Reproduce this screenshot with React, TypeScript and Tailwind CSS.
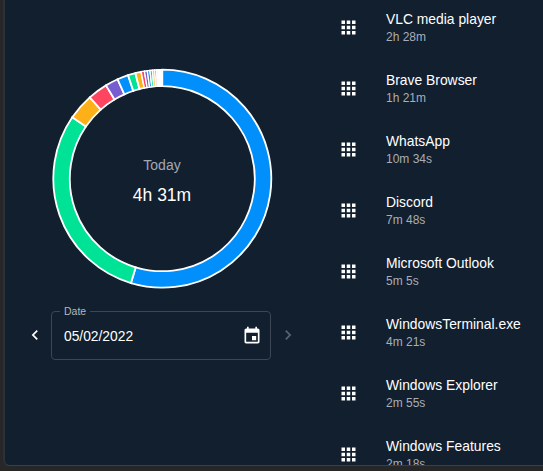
const apps = [
  { name: 'VLC media player', time: '2h 28m' },
  { name: 'Brave Browser', time: '1h 21m' },
  { name: 'WhatsApp', time: '10m 34s' },
  { name: 'Discord', time: '7m 48s' },
  { name: 'Microsoft Outlook', time: '5m 5s' },
  { name: 'WindowsTerminal.exe', time: '4m 21s' },
  { name: 'Windows Explorer', time: '2m 55s' },
  { name: 'Windows Features', time: '2m 18s' },
];

const palette = ['#008ffb', '#00e396', '#feb019', '#ff4560', '#775dd0'];
const sweeps = [
  196.7, 107.6, 14, 10.6, 6.9, 5.9, 4, 3.1, 1.75, 1.55, 1.4, 1.3, 1.2, 1, 0.8,
  0.6, 0.5, 0.4, 0.3, 0.2, 0.2,
];

function point(radius: number, angle: number) {
  const a = (angle * Math.PI) / 180;
  return `${110.3 + radius * Math.sin(a)} ${109.7 - radius * Math.cos(a)}`;
}

function Donut() {
  let start = 0;
  return (
    <svg className="h-[220px] w-[220px] overflow-visible" viewBox="0 0 220 220">
      {sweeps.map((sweep, i) => {
        const from = start;
        const to = Math.min(from + sweep, 360);
        start = to;
        const large = sweep > 180 ? 1 : 0;
        return (
          <path
            key={i}
            d={`M${point(109, from)}A109 109 0 ${large} 1 ${point(109, to)}L${point(92.5, to)}A92.5 92.5 0 ${large} 0 ${point(92.5, from)}Z`}
            fill={palette[i % 5]}
            stroke="#fff"
            strokeWidth={sweep < 2 ? 1.4 : 1.8}
          />
        );
      })}
    </svg>
  );
}

function Icon({ d, className }: { d: string; className: string }) {
  return (
    <svg viewBox="0 0 24 24" fill="currentColor" className={className}>
      <path d={d} />
    </svg>
  );
}

export default function App() {
  return (
    <div className="h-[471px] w-[543px] overflow-hidden bg-[#272727] pb-[5px] pl-[3px] font-['Liberation_Sans',Arial,sans-serif] text-white">
      <div className="flex h-[466px] overflow-hidden rounded-bl-[6px] border-b border-l-2 border-b-[#3a3f49] border-l-[#2b303d] bg-[#121f2f]">
        <main className="w-[321px] shrink-0 pt-[69px]">
          <div className="ml-[47px] grid h-[220px] w-[220px] place-items-center">
            <div className="col-start-1 row-start-1">
              <Donut />
            </div>
            <div className="col-start-1 row-start-1 pt-[4px] text-center">
              <div className="text-[14px] leading-[18px] text-[#a3a8b1]">Today</div>
              <div className="mt-[10px] text-[17.5px] leading-[22px]">4h 31m</div>
            </div>
          </div>
          <div className="ml-[20px] mt-[15px] flex items-center">
            <Icon className="mt-[6px] h-[20px] w-[20px]" d="M15.41 7.41 14 6l-6 6 6 6 1.41-1.41L10.83 12z" />
            <fieldset className="ml-[6px] flex h-[56px] w-[220px] rounded-[4px] border border-[#3c4654] pl-[12px] pr-[8px]">
              <legend className="-ml-[4px] px-[4px] text-[10.5px] leading-[14px] text-[#b3b7be]">Date</legend>
              <div className="flex h-[36px] w-full items-center justify-between">
                <span className="pt-[2px] text-[13.8px]">05/02/2022</span>
                <Icon className="h-[20px] w-[20px]" d="M17 12h-5v5h5zM16 1v2H8V1H6v2H5c-1.11 0-1.99.9-1.99 2L3 19c0 1.1.89 2 2 2h14c1.1 0 2-.9 2-2V5c0-1.1-.9-2-2-2h-1V1zm3 18H5V8h14z" />
              </div>
            </fieldset>
            <Icon className="ml-[7px] mt-[6px] h-[20px] w-[20px] text-[#5a6370]" d="M10 6 8.59 7.41 13.17 12l-4.58 4.59L10 18l6-6z" />
          </div>
        </main>
        <ul className="flex flex-col">
          {apps.map((app) => (
            <li key={app.name} className="flex h-[61px] shrink-0 items-start pt-[9px]">
              <Icon
                className="ml-[12px] mt-[7.6px] h-[21px] w-[21px]"
                d="M4 8h4V4H4zm6 12h4v-4h-4zm-6 0h4v-4H4zm0-6h4v-4H4zm6 0h4v-4h-4zm6-10v4h4V4zm-6 4h4V4h-4zm6 6h4v-4h-4zm0 6h4v-4h-4z"
              />
              <div className="ml-[27px] whitespace-nowrap">
                <div className="text-[13.86px] leading-[20px]">{app.name}</div>
                <div className="text-[12px] leading-[17px] text-[#a9aeb6]">{app.time}</div>
              </div>
            </li>
          ))}
        </ul>
      </div>
    </div>
  );
}
